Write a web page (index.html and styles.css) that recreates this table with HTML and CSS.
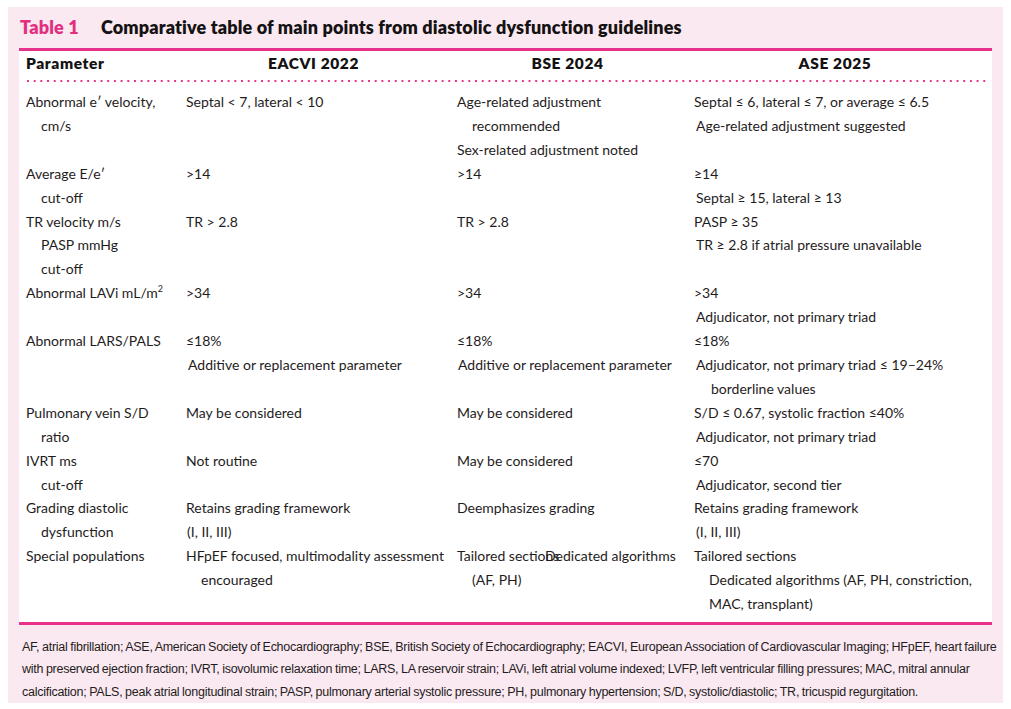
FILE: index.html
```html
<!DOCTYPE html>
<html lang="en">
<head>
<meta charset="utf-8">
<title>Table 1</title>
<link rel="stylesheet" href="styles.css">
</head>
<body>
<div class="panel">
  <h1 class="title"><span class="tnum">Table 1</span><span class="ttext">Comparative table of main points from diastolic dysfunction guidelines</span></h1>
  <div class="table">
    <div class="row head">
      <div class="c0">Parameter</div>
      <div class="hc">EACVI 2022</div>
      <div class="hc">BSE 2024</div>
      <div class="hc">ASE 2025</div>
    </div>
    <div class="dots"></div>
    <div class="body">
      <div class="row">
        <div class="c0"><p class="p">Abnormal e′ velocity,<br>cm/s</p></div>
        <div><p class="p">Septal &lt; 7, lateral &lt; 10</p></div>
        <div><p class="p">Age-related adjustment<br>recommended</p><p class="p">Sex-related adjustment noted</p></div>
        <div><p class="p">Septal ≤ 6, lateral ≤ 7, or average ≤ 6.5</p><p class="p o2">Age-related adjustment suggested</p></div>
      </div>
      <div class="row">
        <div class="c0"><p class="p">Average E/e′<br>cut-off</p></div>
        <div><p class="p">&gt;14</p></div>
        <div><p class="p">&gt;14</p></div>
        <div><p class="p">≥14</p><p class="p o2">Septal ≥ 15, lateral ≥ 13</p></div>
      </div>
      <div class="row">
        <div class="c0"><p class="p">TR velocity m/s<br>PASP mmHg<br>cut-off</p></div>
        <div><p class="p">TR &gt; 2.8</p></div>
        <div><p class="p">TR &gt; 2.8</p></div>
        <div><p class="p">PASP ≥ 35</p><p class="p o2">TR ≥ 2.8 if atrial pressure unavailable</p></div>
      </div>
      <div class="row">
        <div class="c0"><p class="p">Abnormal LAVi mL/m<sup>2</sup></p></div>
        <div><p class="p">&gt;34</p></div>
        <div><p class="p">&gt;34</p></div>
        <div><p class="p">&gt;34</p><p class="p o2">Adjudicator, not primary triad</p></div>
      </div>
      <div class="row">
        <div class="c0"><p class="p">Abnormal LARS/PALS</p></div>
        <div><p class="p">≤18%</p><p class="p o2">Additive or replacement parameter</p></div>
        <div><p class="p">≤18%</p><p class="p o1">Additive or replacement parameter</p></div>
        <div><p class="p">≤18%</p><p class="p o2">Adjudicator, not primary triad ≤ 19–24%<br>borderline values</p></div>
      </div>
      <div class="row">
        <div class="c0"><p class="p">Pulmonary vein S/D<br>ratio</p></div>
        <div><p class="p">May be considered</p></div>
        <div><p class="p">May be considered</p></div>
        <div><p class="p">S/D ≤ 0.67, systolic fraction ≤40%</p><p class="p o2">Adjudicator, not primary triad</p></div>
      </div>
      <div class="row">
        <div class="c0"><p class="p">IVRT ms<br>cut-off</p></div>
        <div><p class="p">Not routine</p></div>
        <div><p class="p">May be considered</p></div>
        <div><p class="p">≤70</p><p class="p o2">Adjudicator, second tier</p></div>
      </div>
      <div class="row">
        <div class="c0"><p class="p">Grading diastolic<br>dysfunction</p></div>
        <div><p class="p">Retains grading framework</p><p class="p o1">(I, II, III)</p></div>
        <div><p class="p">Deemphasizes grading</p></div>
        <div><p class="p">Retains grading framework</p><p class="p o2">(I, II, III)</p></div>
      </div>
      <div class="row">
        <div class="c0"><p class="p">Special populations</p></div>
        <div><p class="p">HFpEF focused, multimodality assessment<br>encouraged</p></div>
        <div class="overlap-cell"><p class="p">Tailored sections<br>(AF, PH)</p><span class="overlay">Dedicated algorithms</span></div>
        <div><p class="p">Tailored sections</p><p class="p ind">Dedicated algorithms (AF, PH, constriction,<br>MAC, transplant)</p></div>
      </div>
    </div>
  </div>
  <p class="notes">AF, atrial fibrillation; ASE, American Society of Echocardiography; BSE, British Society of Echocardiography; EACVI, European Association of Cardiovascular Imaging; HFpEF, heart failure<br>with preserved ejection fraction; IVRT, isovolumic relaxation time; LARS, LA reservoir strain; LAVi, left atrial volume indexed; LVFP, left ventricular filling pressures; MAC, mitral annular<br>calcification; PALS, peak atrial longitudinal strain; PASP, pulmonary arterial systolic pressure; PH, pulmonary hypertension; S/D, systolic/diastolic; TR, tricuspid regurgitation.</p>
</div>
</body>
</html>
```

FILE: styles.css
```css
html, body {
  margin: 0;
  padding: 0;
  background: #ffffff;
}

body {
  padding: 7px 8px 6px 8px;
  font-family: "Lato", "Liberation Sans", sans-serif;
  color: #1f1c1d;
}

.panel {
  background: #fbe9f1;
  padding: 9px 11px 0 11px;
  height: 696px;
  box-sizing: border-box;
}

.title {
  margin: 0 0 0 1px;
  height: 32px;
  display: flex;
  align-items: flex-start;
  font-size: 18px;
  line-height: 22px;
  font-weight: 800;
  letter-spacing: 0.15px;
  color: #141213;
}

.tnum {
  color: #e2307f;
  width: 81px;
  flex: none;
}

.table {
  background: #ffffff;
  border-top: 3px solid #e8318a;
  border-bottom: 3px solid #e8318a;
  padding: 0 0 6px 7px;
}

.row {
  display: grid;
  grid-template-columns: 160px 271px 237px 1fr;
}

.head {
  height: 29px;
  align-items: start;
  font-size: 15.5px;
  line-height: 18px;
  font-weight: 800;
  letter-spacing: 0.6px;
  padding-top: 3px;
  box-sizing: border-box;
  color: #141213;
}

.hc {
  text-align: center;
  padding-right: 16px;
}

.dots {
  height: 2px;
  margin: 0 6px 0 1px;
  background-image: linear-gradient(to right, #e8318a 0 2px, transparent 2px);
  background-size: 6.7px 2px;
  background-repeat: repeat-x;
}

.body {
  padding-top: 8px;
  font-size: 14px;
  line-height: 23.9px;
}

.p {
  margin: 0;
  padding-left: 15px;
  text-indent: -15px;
  white-space: nowrap;
}

.p.o1 {
  margin-left: 1px;
}

.p.o2 {
  margin-left: 2px;
}

.p.ind {
  margin-left: 15px;
  padding-left: 0;
  text-indent: 0;
}

sup {
  font-size: 9px;
  line-height: 0;
  vertical-align: 6px;
}

.overlap-cell {
  position: relative;
}

.overlay {
  position: absolute;
  left: 88px;
  top: 0;
  white-space: nowrap;
}

.notes {
  margin: 0;
  padding: 11px 0 0 3px;
  font-family: "Liberation Sans", "Lato", sans-serif;
  font-size: 12.5px;
  letter-spacing: -0.26px;
  word-spacing: -0.5px;
  line-height: 22.5px;
  color: #1f1c1d;
  white-space: nowrap;
}
```
